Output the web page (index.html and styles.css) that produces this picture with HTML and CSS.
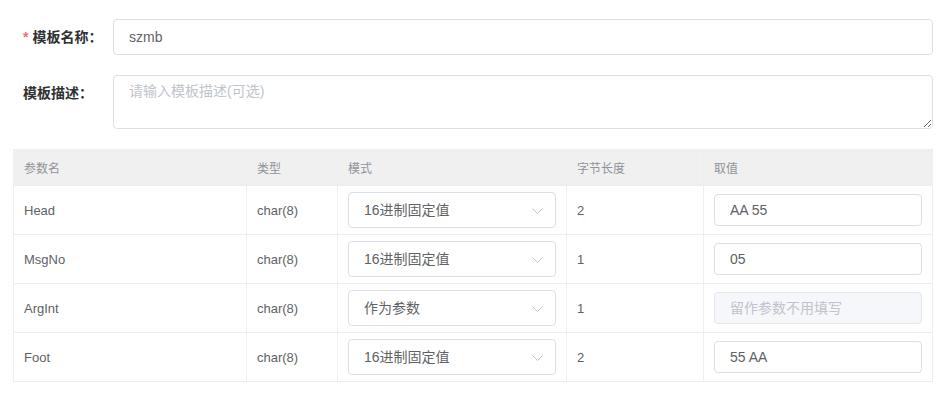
FILE: index.html
```html
<!DOCTYPE html>
<html>
  <head>
    <meta charset="utf-8">
    <link rel="stylesheet" href="styles.css">
  </head>
  <body>
    <div class="template-form">
      <div class="form-item">
        <label class="form-label"><span class="required">*</span>模板名称：</label>
        <div class="form-content">
          <input class="text-input" type="text" value="szmb" />
        </div>
      </div>

      <div class="form-item">
        <label class="form-label">模板描述：</label>
        <div class="form-content">
          <textarea class="text-area" placeholder="请输入模板描述(可选)"></textarea>
        </div>
      </div>

      <table class="param-table">
        <colgroup>
          <col style="width: 233px">
          <col style="width: 91px">
          <col style="width: 229px">
          <col style="width: 137px">
          <col>
        </colgroup>
        <thead>
          <tr>
            <th>参数名</th>
            <th>类型</th>
            <th>模式</th>
            <th>字节长度</th>
            <th>取值</th>
          </tr>
        </thead>
        <tbody>
          <tr>
            <td>Head</td>
            <td>char(8)</td>
            <td>
              <div class="select-box">
                <span>16进制固定值</span>
                <svg class="arrow" width="11" height="6" viewBox="0 0 11 6"><polyline points="0.5,0.5 5.5,5.5 10.5,0.5" /></svg>
              </div>
            </td>
            <td>2</td>
            <td><input class="cell-input" type="text" value="AA 55" /></td>
          </tr>
          <tr>
            <td>MsgNo</td>
            <td>char(8)</td>
            <td>
              <div class="select-box">
                <span>16进制固定值</span>
                <svg class="arrow" width="11" height="6" viewBox="0 0 11 6"><polyline points="0.5,0.5 5.5,5.5 10.5,0.5" /></svg>
              </div>
            </td>
            <td>1</td>
            <td><input class="cell-input" type="text" value="05" /></td>
          </tr>
          <tr>
            <td>ArgInt</td>
            <td>char(8)</td>
            <td>
              <div class="select-box">
                <span>作为参数</span>
                <svg class="arrow" width="11" height="6" viewBox="0 0 11 6"><polyline points="0.5,0.5 5.5,5.5 10.5,0.5" /></svg>
              </div>
            </td>
            <td>1</td>
            <td><input class="cell-input" type="text" placeholder="留作参数不用填写" disabled /></td>
          </tr>
          <tr>
            <td>Foot</td>
            <td>char(8)</td>
            <td>
              <div class="select-box">
                <span>16进制固定值</span>
                <svg class="arrow" width="11" height="6" viewBox="0 0 11 6"><polyline points="0.5,0.5 5.5,5.5 10.5,0.5" /></svg>
              </div>
            </td>
            <td>2</td>
            <td><input class="cell-input" type="text" value="55 AA" /></td>
          </tr>
        </tbody>
      </table>
    </div>
  </body>
</html>
```

FILE: styles.css
```css
body {
  margin: 0;
  background: #fff;
  font-family: "Helvetica Neue", Helvetica, "Liberation Sans", "Noto Sans CJK SC", sans-serif;
  color: #606266;
}

.template-form {
  padding: 19px 8px 0 13px;
}

.form-item {
  display: flex;
  margin-bottom: 20px;
}

.form-label {
  width: 100px;
  flex-shrink: 0;
  padding-left: 10px;
  box-sizing: border-box;
  line-height: 36px;
  font-size: 14px;
  font-weight: bold;
  color: #303133;
}

.required {
  color: #f56c6c;
  margin-right: 4px;
}

.form-content {
  flex: 1;
}

.text-input,
.text-area,
.cell-input {
  display: block;
  width: 100%;
  box-sizing: border-box;
  border: 1px solid #dcdfe6;
  border-radius: 4px;
  background: #fff;
  color: #606266;
  font-family: inherit;
  font-size: 14px;
  outline: none;
}

.text-input {
  height: 36px;
  padding: 0 15px;
}

.text-area {
  height: 54px;
  padding: 5px 15px;
  line-height: 1.5;
  resize: vertical;
}

.text-area::placeholder,
.cell-input::placeholder {
  color: #c0c4cc;
}

/* table */
.param-table {
  width: 920px;
  table-layout: fixed;
  border-collapse: collapse;
  border: 1px solid #ebeef5;
}

.param-table th {
  height: 35px;
  padding: 0 10px;
  background: #f0f0f0;
  border: 1px solid #ebeef5;
  text-align: left;
  font-size: 12px;
  font-weight: normal;
  color: #909399;
}

.param-table td {
  height: 36px;
  padding: 6px 10px;
  border: 1px solid #ebeef5;
  font-size: 13px;
  color: #606266;
}

.select-box {
  position: relative;
  height: 36px;
  box-sizing: border-box;
  border: 1px solid #dcdfe6;
  border-radius: 4px;
  padding: 0 30px 0 15px;
  line-height: 34px;
  font-size: 14px;
  color: #606266;
}

.arrow {
  position: absolute;
  right: 12px;
  top: 15px;
  fill: none;
  stroke: #c0c4cc;
  stroke-width: 1;
}

.cell-input {
  height: 32px;
  padding: 0 15px;
}

.cell-input:disabled {
  background: #f5f7fa;
  border-color: #e4e7ed;
}
```
